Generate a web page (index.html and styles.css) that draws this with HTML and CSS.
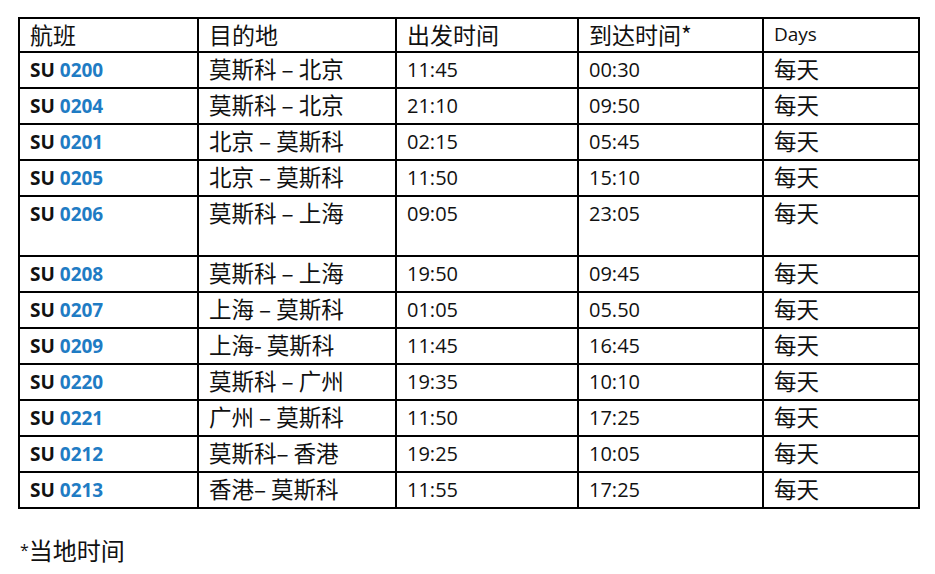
FILE: index.html
```html
<!DOCTYPE html>
<html lang="zh">
<head>
<meta charset="utf-8">
<link rel="stylesheet" href="styles.css">
</head>
<body>
<div class="page">
<table class="sched">
<thead>
<tr class="head">
<th class="c1 cjk">航班</th>
<th class="c2 cjk">目的地</th>
<th class="c3 cjk">出发时间</th>
<th class="c4 cjk">到达时间*</th>
<th class="c5 lat">Days</th>
</tr>
</thead>
<tbody>
<tr><td class="fl">SU <span class="num">0200</span></td><td class="cjk">莫斯科 – 北京</td><td class="t">11:45</td><td class="t">00:30</td><td class="cjk">每天</td></tr>
<tr><td class="fl">SU <span class="num">0204</span></td><td class="cjk">莫斯科 – 北京</td><td class="t">21:10</td><td class="t">09:50</td><td class="cjk">每天</td></tr>
<tr><td class="fl">SU <span class="num">0201</span></td><td class="cjk">北京 – 莫斯科</td><td class="t">02:15</td><td class="t">05:45</td><td class="cjk">每天</td></tr>
<tr><td class="fl">SU <span class="num">0205</span></td><td class="cjk">北京 – 莫斯科</td><td class="t">11:50</td><td class="t">15:10</td><td class="cjk">每天</td></tr>
<tr class="tall"><td class="fl">SU <span class="num">0206</span></td><td class="cjk">莫斯科 – 上海</td><td class="t">09:05</td><td class="t">23:05</td><td class="cjk">每天</td></tr>
<tr><td class="fl">SU <span class="num">0208</span></td><td class="cjk">莫斯科 – 上海</td><td class="t">19:50</td><td class="t">09:45</td><td class="cjk">每天</td></tr>
<tr><td class="fl">SU <span class="num">0207</span></td><td class="cjk">上海 – 莫斯科</td><td class="t">01:05</td><td class="t">05.50</td><td class="cjk">每天</td></tr>
<tr><td class="fl">SU <span class="num">0209</span></td><td class="cjk">上海- 莫斯科</td><td class="t">11:45</td><td class="t">16:45</td><td class="cjk">每天</td></tr>
<tr><td class="fl">SU <span class="num">0220</span></td><td class="cjk">莫斯科 – 广州</td><td class="t">19:35</td><td class="t">10:10</td><td class="cjk">每天</td></tr>
<tr><td class="fl">SU <span class="num">0221</span></td><td class="cjk">广州 – 莫斯科</td><td class="t">11:50</td><td class="t">17:25</td><td class="cjk">每天</td></tr>
<tr><td class="fl">SU <span class="num">0212</span></td><td class="cjk">莫斯科– 香港</td><td class="t">19:25</td><td class="t">10:05</td><td class="cjk">每天</td></tr>
<tr><td class="fl">SU <span class="num">0213</span></td><td class="cjk">香港– 莫斯科</td><td class="t">11:55</td><td class="t">17:25</td><td class="cjk">每天</td></tr>
</tbody>
</table>
<p class="note"><span class="ast">*</span>当地时间</p>
</div>
</body>
</html>
```
FILE: styles.css
```css
html, body {
  margin: 0;
  padding: 0;
  background: #ffffff;
}
.page {
  padding: 17px 0 0 18px;
  font-family: "Open Sans", "Noto Sans CJK SC", sans-serif;
  color: #111111;
}
.sched {
  border-collapse: separate;
  border-spacing: 0;
  table-layout: fixed;
  width: 902px;
  border-left: 2px solid #000;
  border-top: 2px solid #000;
}
.sched th, .sched td {
  box-sizing: border-box;
  border-right: 2px solid #000;
  border-bottom: 2px solid #000;
  padding: 3px 0 0 10px;
  text-align: left;
  vertical-align: top;
  font-weight: normal;
  height: 36px;
  line-height: 28px;
  white-space: nowrap;
}
.sched tr.head th {
  height: 34px;
  padding-top: 1px;
}
.sched tr.tall td {
  height: 60px;
}
.c1 { width: 179px; }
.c2 { width: 198px; }
.c3 { width: 182px; }
.c4 { width: 185px; }
.c5 { width: 156px; }
.sched .cjk {
  font-family: "Noto Sans CJK SC", sans-serif;
  font-size: 22.5px;
  font-weight: 400;
}
.sched td.cjk {
  padding-top: 1px;
}
.sched th.cjk {
  font-size: 23px;
  padding-top: 0;
}
.sched .lat {
  font-size: 19px;
  padding-top: 3px;
}
.sched .fl {
  font-size: 19px;
  font-weight: bold;
}
.num {
  color: #1f7cc4;
}
.sched .t {
  font-size: 20px;
}
.note {
  margin: 23px 0 0 2px;
  font-family: "Noto Sans CJK SC", sans-serif;
  font-size: 24px;
  font-weight: 400;
}
.ast {
  font-family: "Open Sans", sans-serif;
  font-size: 16px;
  vertical-align: 4px;
}
```
